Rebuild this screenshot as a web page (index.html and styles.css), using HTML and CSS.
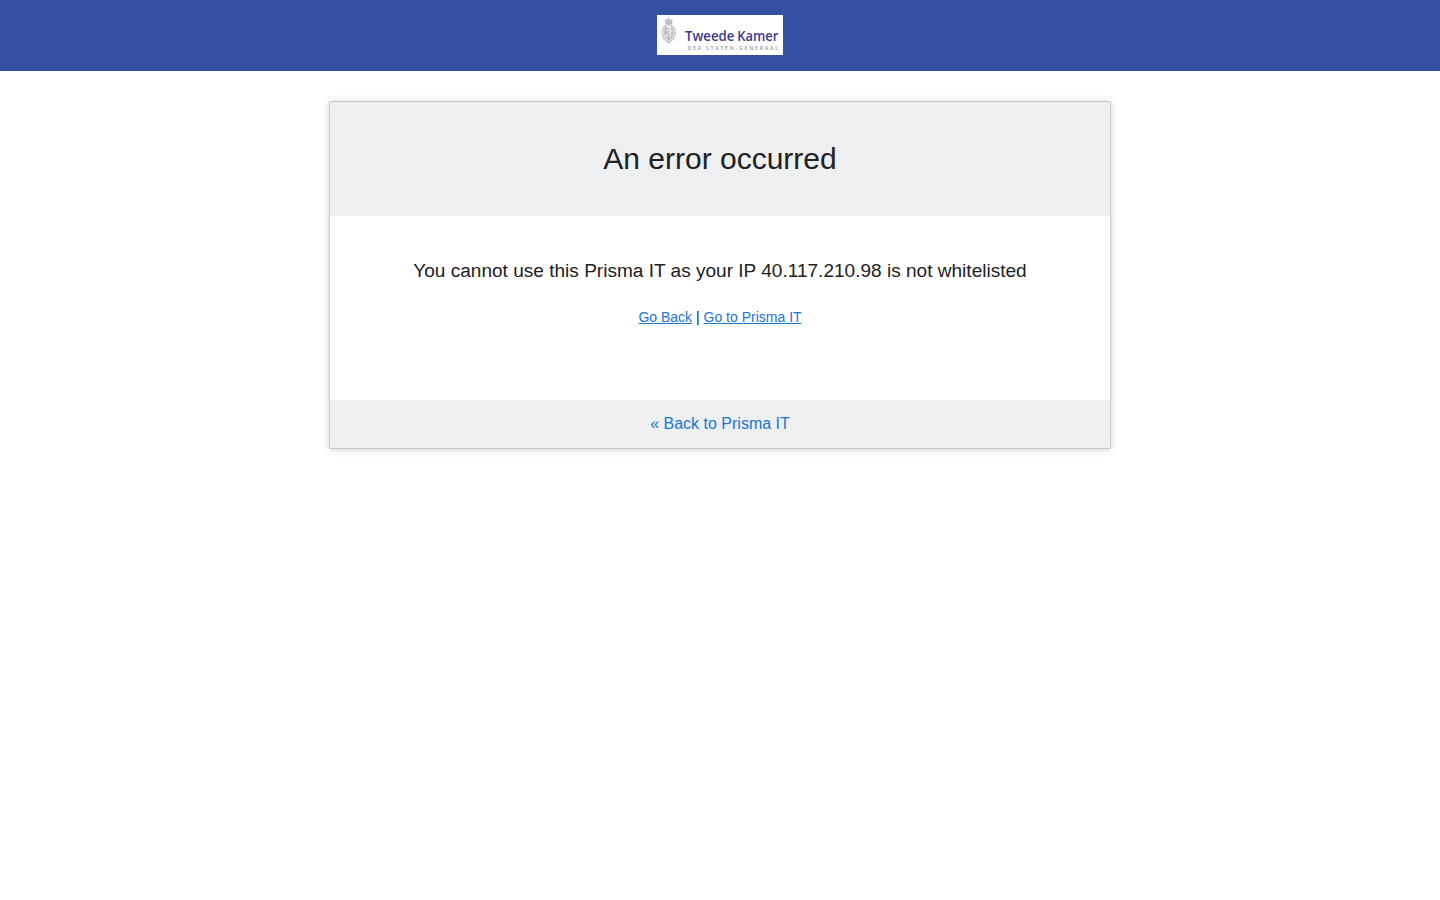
FILE: index.html
```html
<!DOCTYPE html>
<html lang="en">
<head>
<meta charset="utf-8">
<title>An error occurred</title>
<link rel="stylesheet" href="styles.css">
</head>
<body>
<header class="topbar">
  <svg class="logo" width="126" height="40" viewBox="0 0 126 40" role="img" aria-label="Tweede Kamer der Staten-Generaal">
    <rect width="126" height="40" fill="#fff"/>
    <g class="crest">
      <path d="M8.5 9 L7.5 5.2 Q9 3.3 11 4.2 L11.7 2.2 L12.4 4.2 Q14.4 3.3 15.9 5.2 L14.9 9Z" fill="#d0d0d0"/>
      <path d="M8.3 8.7h6.8M9 5.3l1.2 2.5M14.4 5.3l-1.2 2.5M11.7 2.6v5" fill="none" stroke="#8d8d8d" stroke-width=".7"/>
      <ellipse cx="11.7" cy="18" rx="7.2" ry="9.4" fill="#dcdcdc"/>
      <ellipse cx="11.7" cy="18" rx="6.5" ry="8.7" fill="none" stroke="#a9a9a9" stroke-width=".9" stroke-dasharray="1.3 .8"/>
      <path d="M7.6 12.5h8.2v7.3q-.5 3.8-4.1 5.6q-3.6-1.8-4.1-5.6Z" fill="#b3b3b3"/>
      <path d="M10.2 12.8l2.4-.5 1 1.7-1.2 1.3 2.1 1.2-1.7 1.5 1 2.4-1.4 2M12 16l-2.7-1M11.6 18.2l-2.6 2.6 1 1.5" fill="none" stroke="#f4f4f4" stroke-width="1.2"/>
      <path d="M10.2 26.5l1.5 2.6 1.5-2.6Z" fill="#b5b5b5"/>
    </g>
    <text class="logo-name" x="28" y="26.4" textLength="49.5" lengthAdjust="spacingAndGlyphs">Tweede</text>
    <text class="logo-name" x="80.3" y="26.4" textLength="41" lengthAdjust="spacingAndGlyphs">Kamer</text>
    <text class="logo-sub" x="30.5" y="35.4" textLength="90.5" lengthAdjust="spacing">DER STATEN-GENERAAL</text>
  </svg>
</header>
<main class="card">
  <div class="card-head"><h1 class="title">An error occurred</h1></div>
  <div class="card-body">
    <p class="message">You cannot use this Prisma IT as your IP 40.117.210.98 is not whitelisted</p>
    <p class="links"><a href="#">Go Back</a> | <a href="#">Go to Prisma IT</a></p>
  </div>
  <footer class="card-foot"><a href="#">« Back to Prisma IT</a></footer>
</main>
</body>
</html>
```
FILE: styles.css
```css
body {
  min-height: 100vh;
  margin: 0;
  background: #fff;
  color: #212121;
  font: 14px/20px "Liberation Sans", Arial, sans-serif;
  text-align: center;
}
a { color: #1976d2; }
.topbar {
  display: flex;
  justify-content: center;
  height: 56px;
  padding-top: 15px;
  background: #3350a2;
}
.logo { display: block; }
.crest { opacity: .9; }
.logo-name {
  font: 600 13.8px "Open Sans", sans-serif;
  fill: #3b3b88;
}
.logo-sub {
  font: 600 5.2px "Open Sans", sans-serif;
  fill: #999;
}
.card {
  width: 780px;
  margin: 31px auto 0;
  border-radius: 1px;
  box-shadow: 0 0 0 1px #c7c8ca, 0 1px 8px rgba(0, 0, 0, .22);
}
.card-head {
  padding: 37px 0;
  background: #eeeff1;
}
.title {
  margin: 0;
  font-size: 30px;
  font-weight: 400;
  line-height: 40px;
}
.card-body {
  height: 144px;
  padding-top: 40px;
}
.message {
  margin: 0;
  font-size: 19.06px;
  line-height: 30px;
}
.links { margin: 21px 0 0; }
.card-foot {
  font-size: 16px;
  line-height: 48px;
  background: #eeeff1;
}
.card-foot a { text-decoration: none; }
```
